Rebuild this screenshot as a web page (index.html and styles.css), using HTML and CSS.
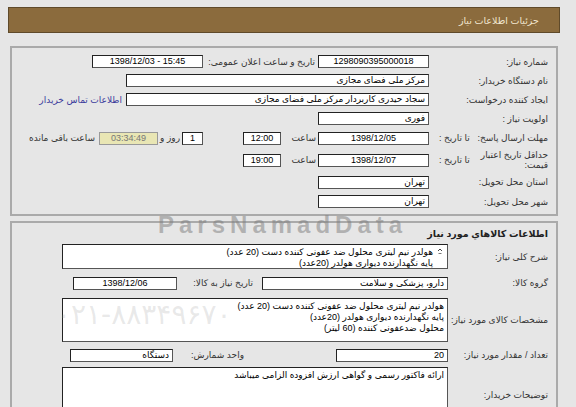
FILE: index.html
```html
<!DOCTYPE html>
<html lang="fa">
<head>
<meta charset="utf-8">
<link rel="stylesheet" href="styles.css">
</head>
<body>
<div class="page">
  <div class="header"><span>جزئیات اطلاعات نیاز</span></div>

  <div class="box box1">
    <div class="row">
      <div class="label">شماره نیاز:</div>
      <div class="field c w111">1298090395000018</div>
      <span class="lbl l2">تاریخ و ساعت اعلان عمومی:</span>
      <div class="field c w111 ltr">1398/12/03 - 15:45</div>
    </div>
    <div class="row">
      <div class="label">نام دستگاه خریدار:</div>
      <div class="field w303">مرکز ملی فضای مجازی</div>
    </div>
    <div class="row">
      <div class="label">ایجاد کننده درخواست:</div>
      <div class="field w303">سجاد حیدری کاربردار مرکز ملی فضای مجازی</div>
      <a class="link">اطلاعات تماس خریدار</a>
    </div>
    <div class="row">
      <div class="label">اولویت نیاز :</div>
      <div class="field w111">فوری</div>
    </div>
    <div class="row r20">
      <div class="label split"><span>مهلت ارسال پاسخ:</span><span class="sub">تا تاریخ :</span></div>
      <div class="field c w111">1398/12/05</div>
      <span class="lbl saat">ساعت</span>
      <div class="field c w38">12:00</div>
      <div class="field c w21 ml40">1</div>
      <span class="lbl rooz">روز و</span>
      <div class="field c w59 remain">03:34:49</div>
      <span class="lbl baqi">ساعت باقی مانده</span>
    </div>
    <div class="row r24">
      <div class="label split"><span class="two">حداقل تاریخ اعتبار قیمت:</span><span class="sub">تا تاریخ :</span></div>
      <div class="field c w111">1398/12/07</div>
      <span class="lbl saat">ساعت</span>
      <div class="field c w38">19:00</div>
    </div>
    <div class="row r20">
      <div class="label">استان محل تحویل:</div>
      <div class="field w111">تهران</div>
    </div>
    <div class="row">
      <div class="label">شهر محل تحویل:</div>
      <div class="field w111">تهران</div>
    </div>
  </div>

  <div class="box box2">
    <div class="row heading">اطلاعات كالاهاي مورد نياز</div>
    <div class="row r27">
      <div class="label l2c">شرح کلی نیاز:</div>
      <div class="area h25">
        <svg class="scroll" width="6" height="8" viewBox="0 0 6 8"><path d="M1 4 L3 2 L5 4" fill="none" stroke="#444" stroke-width="1"/><path d="M1.5 6.5 H4.5" stroke="#777" stroke-width="1"/></svg>
        <div class="line">هولدر نیم لیتری محلول ضد عفونی کننده دست (20 عدد)</div>
        <div class="line">پایه نگهدارنده دیواری هولدر (20عدد)</div>
      </div>
    </div>
    <div class="row r26">
      <div class="label l2c">گروه کالا:</div>
      <div class="field w186">دارو، پزشکی و سلامت</div>
      <span class="lbl need">تاریخ نیاز به کالا:</span>
      <div class="field c w104 ml7">1398/12/06</div>
    </div>
    <div class="row r47">
      <div class="label l2c">مشخصات کالای مورد نیاز:</div>
      <div class="area h44 tight">
        <div class="line">هولدر نیم لیتری محلول ضد عفونی کننده دست (20 عدد)</div>
        <div class="line">پایه نگهدارنده دیواری هولدر (20عدد)</div>
        <div class="line">محلول ضدعفونی کننده (60 لیتر)</div>
      </div>
    </div>
    <div class="row r24">
      <div class="label l2c">تعداد / مقدار مورد نیاز:</div>
      <div class="field w112">20</div>
      <span class="lbl unit">واحد شمارش:</span>
      <div class="field w103 ml17">دستگاه</div>
    </div>
    <div class="row r56">
      <div class="label l2c">توضیحات خریدار:</div>
      <div class="area h56 tight">
        <div class="line">ارائه فاکتور رسمی و گواهی ارزش افزوده الزامی میباشد</div>
      </div>
    </div>
  </div>

  <div class="watermark">ParsNamadData</div>
  <div class="wm-phone">۰۲۱-۸۸۳۴۹۶۷۰</div>
</div>
</body>
</html>
```

FILE: styles.css
```css
* { box-sizing: border-box; }

html, body {
  margin: 0;
  background: #e6e6e6;
  overflow: hidden;
}

body {
  font-family: "Liberation Sans", "DejaVu Sans", sans-serif;
  font-size: 9px;
  color: #333;
}

.page {
  position: relative;
  width: 576px;
  height: 407px;
  padding: 7px 16px 0 8px;
}

.header {
  height: 26px;
  background: #8b6b3d;
  border: 1px solid #5f4a2a;
  display: flex;
  align-items: center;
  direction: rtl;
  padding-right: 20px;
  color: #f1e6cf;
  font-size: 9.5px;
}

.box {
  margin: 13px 2px 0;
  border: 2px solid #aaaaaa;
  padding: 4px 8px 3px 0;
  direction: rtl;
}

.box2 {
  margin-top: 5px;
  padding-top: 0;
  height: 200px;
}

.row {
  display: flex;
  align-items: center;
  height: 19px;
}

.r20 { height: 20px; }
.r24 { height: 24px; }
.r26 { height: 26px; }
.r27 { height: 27px; }
.r47 { height: 47px; }
.r56 { height: 56px; }

.label {
  width: 119px;
  flex: none;
  white-space: nowrap;
  color: #333;
}

.label.l2c { width: 100px; }

.label.split {
  display: flex;
  align-items: center;
  padding-left: 10px;
}

.label .sub {
  margin-right: auto;
}

.label .two {
  width: 70px;
  white-space: normal;
  line-height: 10px;
}

.field {
  flex: none;
  height: 13px;
  background: #fff;
  border: 1px solid #555;
  border-top-color: #222;
  border-left-color: #222;
  line-height: 11px;
  padding: 0 3px;
  color: #000;
  white-space: nowrap;
  overflow: hidden;
}

.c { text-align: center; }
.ltr { direction: ltr; }

.w21 { width: 21px; }
.w38 { width: 38px; }
.w59 { width: 59px; }
.w103 { width: 103px; }
.w104 { width: 104px; }
.w111 { width: 111px; }
.w112 { width: 112px; }
.w186 { width: 186px; }
.w303 { width: 303px; }

.ml40 { margin-right: 40px; }
.ml7 { margin-right: 7px; }
.ml17 { margin-right: 17px; }

.lbl {
  flex: none;
  white-space: nowrap;
  color: #333;
}

.l2 { width: 112px; margin-right: 3px; }
.saat { width: 35px; margin-right: 2px; }
.rooz { width: 22px; margin-right: 2px; }
.baqi { margin-right: 4px; }
.need { width: 69px; margin-right: 9px; }
.unit { width: 54px; margin-right: 92px; }

.remain {
  background: #e9e6b4;
  border-color: #999;
  color: #777;
}

.link {
  margin-right: 4px;
  color: #3b3b9c;
  white-space: nowrap;
}

.heading {
  height: 20px;
  padding-right: 0;
  font-weight: bold;
  color: #222;
  font-size: 9.5px;
}

.area {
  position: relative;
  flex: none;
  width: 386px;
  background: #fff;
  border: 1px solid #555;
  border-top-color: #222;
  border-left-color: #222;
  color: #000;
  padding: 2px 14px 0 3px;
  line-height: 11px;
}

.area.tight { padding-right: 3px; }

.h25 { height: 25px; }
.h44 { height: 44px; }
.h56 { height: 56px; }

.line { white-space: nowrap; }

.scroll {
  position: absolute;
  right: 4px;
  top: 2px;
}

.watermark {
  position: absolute;
  left: 158px;
  top: 211px;
  font-family: "Liberation Sans", sans-serif;
  font-weight: bold;
  font-size: 24px;
  letter-spacing: 5px;
  color: rgba(125, 125, 125, 0.5);
  pointer-events: none;
}

.wm-phone {
  position: absolute;
  left: 56px;
  top: 298px;
  font-family: "DejaVu Sans", sans-serif;
  font-size: 28px;
  color: rgba(140, 140, 140, 0.2);
  pointer-events: none;
  white-space: nowrap;
}
```
